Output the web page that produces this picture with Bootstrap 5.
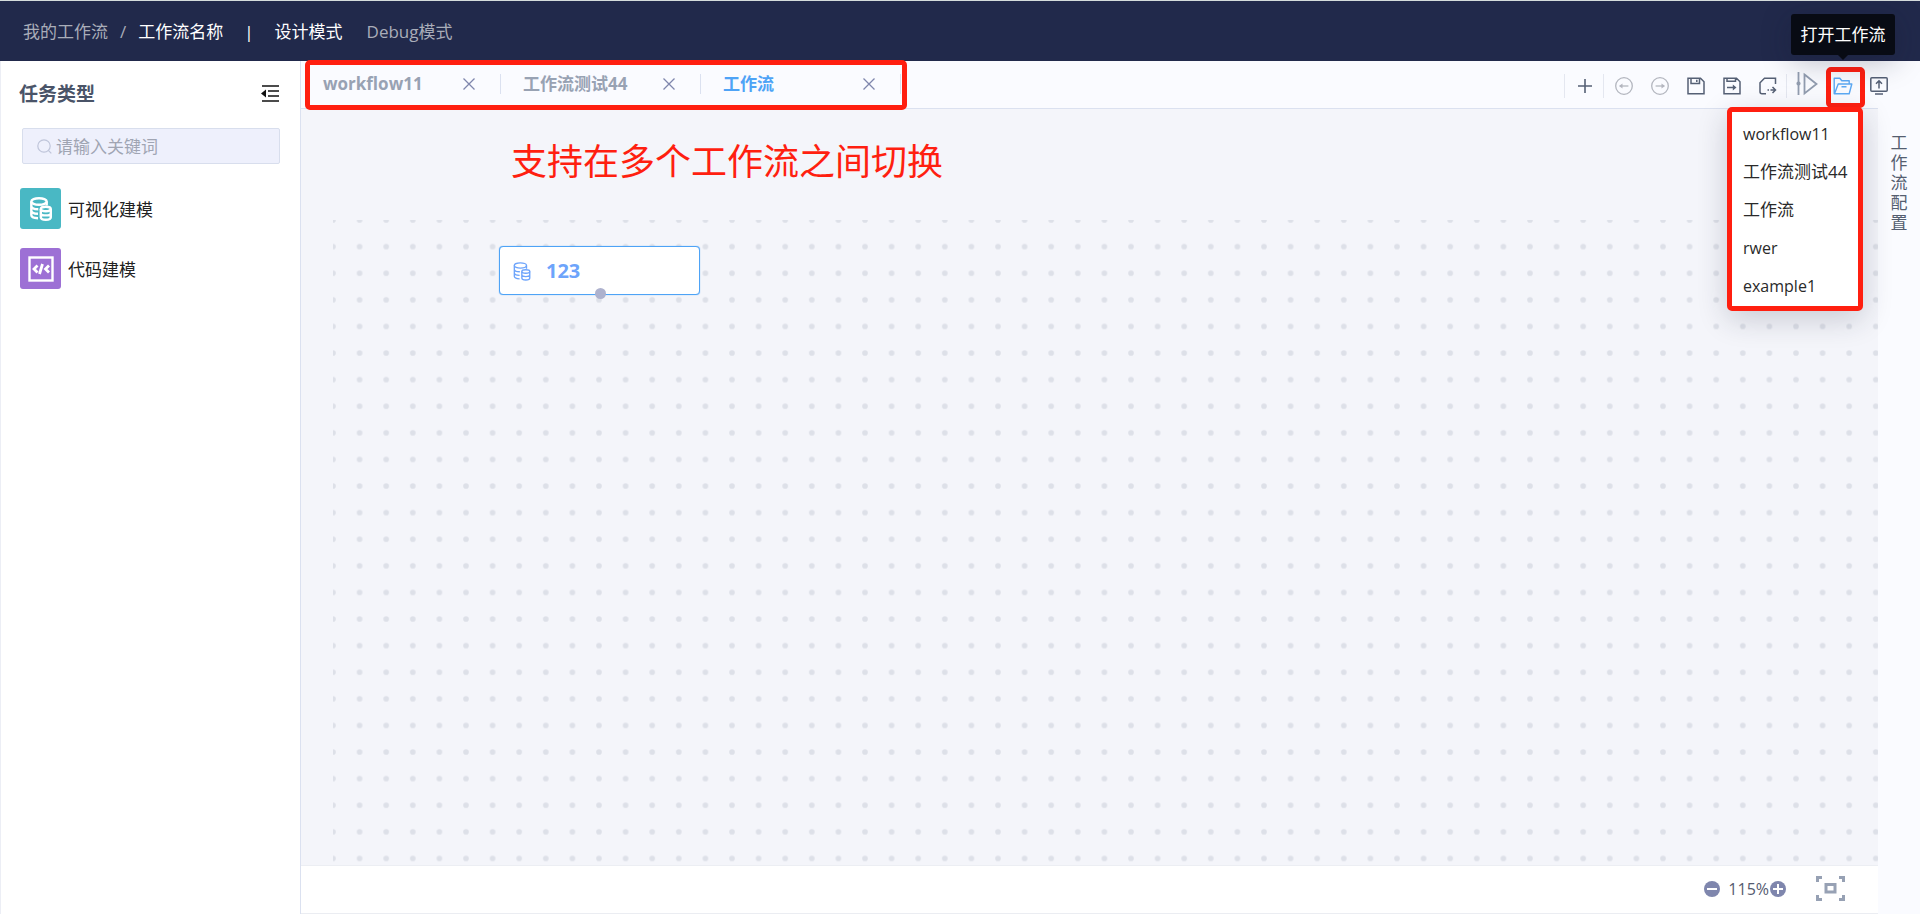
<!DOCTYPE html>
<html lang="zh-CN">
<head>
<meta charset="utf-8">
<meta name="viewport" content="width=device-width, initial-scale=1">
<title>工作流设计</title>
<link href="https://cdn.jsdelivr.net/npm/bootstrap@5.3.0/dist/css/bootstrap.min.css" rel="stylesheet">
<style>
  :root { --line: #dbe1f0; --accent: #4ea3f6; --slate: #556075; --mark-red: #ff1f10; }
  body { font-family: "Open Sans", "Noto Sans CJK SC", sans-serif; font-size: 17px; line-height: 24px; color: #222; background: #fff; }
  a { text-decoration: none; }
  button { padding: 0; border: 0; background: none; color: inherit; }
  svg { display: block; }
  .topbar { height: 61px; background: #21294b; border-top: 1px solid #d5dcdc; padding: 2px 23px 0; gap: 21px; color: #fff; }
  .topbar a { color: #fff; }
  .topbar .dim, .topbar .dim a, .topbar a.dim { color: #a9adb9; }
  .crumbs { gap: 12px; }
  .modes { gap: 24px; }
  .side { width: 301px; border-left: 1px solid #eceef5; border-right: 1px solid var(--line); padding: 20px 20px 0 18px; }
  .side h1 { font-size: 19px; line-height: 26px; font-weight: 700; color: #4a5468; }
  .fold { margin: 0 1px 2px 0; }
  .search { height: 36px; margin: 21px 0 24px 3px; padding: 0 14px; gap: 4px; background: #eef0fc; border: 1px solid #d8deed; border-radius: 2px; color: #bfc5da; }
  .search input { min-width: 0; border: 0; outline: 0; background: none; padding: 2px 0 0; color: #556075; }
  .search input::placeholder { color: #a0a5b3; opacity: 1; }
  .task { gap: 7px; margin: 0 0 19px 1px; color: #222; }
  .task-name { padding-top: 2px; }
  .tile { width: 41px; height: 41px; border-radius: 3px; color: #fff; }
  .teal { background: #49b8c4; }
  .purple { background: #9d70d5; }
  .tools { height: 47px; background: #fafbff; }
  .tabs { height: 47px; z-index: 1; padding-bottom: 2px; }
  .wtab { width: 200px; padding: 0 25px 0 22px; height: 20px; border-right: 1px solid var(--line); color: #98a2b3; font-weight: 700; }
  .wtab a { color: inherit; line-height: 20px; }
  .wtab.current { color: var(--accent); }
  .wtab button { color: #7f86ad; }
  .frame { position: absolute; border: 5px solid var(--mark-red); border-radius: 5px; pointer-events: none; }
  .tab-frame { left: 4px; top: -1px; width: 602px; height: 50px; }
  .open-frame { left: 1px; top: -1px; width: 39px; height: 41px; }
  .actions { padding: 3px 23px 0 0; color: var(--slate); }
  .tool { width: 36px; height: 36px; display: flex; align-items: center; justify-content: center; }
  .tool.off { color: #b3b6bf; }
  .rule { width: 1px; height: 24px; margin-right: 2px; background: #e4e7f0; }
  .open-menu { --bs-dropdown-min-width: 136px; top: 39px; right: -2px; width: 136px; padding: 3px 0 1px; border: 5px solid var(--mark-red); border-radius: 5px; box-shadow: 0 8px 30px rgba(30,35,60,.2); }
  .open-menu a { display: block; padding: 7px 0 7px 11px; font-size: 16px; color: #2a2a2a; white-space: nowrap; }
  .open-menu a.han { font-size: 17px; }
  .tip { position: absolute; top: -54px; left: 50%; transform: translateX(-50%); width: 104px; height: 41px; line-height: 41px; border-radius: 3px; background: #080b14; color: #fff; text-align: center; white-space: nowrap; box-shadow: 0 6px 30px rgba(20,24,45,.28); z-index: 5; }
  .tip::after { content: ""; position: absolute; left: 50%; top: 100%; margin-left: -5px; border: 5px solid transparent; border-bottom: 0; border-top-color: #080b14; }
  .stage { background: #f4f5fa; border-top: 1px solid var(--line); min-height: 400px; }
  .dots { position: absolute; top: 111px; left: 32px; right: 0; bottom: 0; overflow: hidden; }
  .note { position: absolute; left: 210px; top: 28px; font-size: 36px; line-height: 50px; color: var(--mark-red); white-space: nowrap; }
  .node { position: absolute; left: 198px; top: 137px; width: 201px; height: 49px; padding: 1px 13px 0; gap: 15px; background: #fff; border: 1px solid var(--accent); border-radius: 4px; color: #6da4fb; font-size: 20px; font-weight: 700; box-shadow: 0 0 1px var(--accent); }
  .port { position: absolute; left: 50%; bottom: -5px; width: 11px; height: 11px; margin-left: -5px; border-radius: 50%; background: #aeb2ce; }
  .status { height: 49px; padding: 0 33px 2px 0; border-top: 1px solid #eceef3; border-bottom: 1px solid #ebedf2; color: #7f86ad; }
  .zoomval { font-size: 16px; color: #555b70; margin: 0 1px 0 8px; }
  .fit { margin-left: 30px; color: #97a1b4; }
  .rail { width: 42px; background: #fafbff; padding-top: 25px; color: #555e70; }
  .rail a { width: 17px; line-height: 20px; color: inherit; word-break: break-all; }
</style>
</head>
<body class="min-vh-100 d-flex flex-column">

<svg width="0" height="0" class="position-absolute" aria-hidden="true">
  <symbol id="db" viewBox="0 0 22 24" fill="none" stroke="currentColor">
    <ellipse cx="9" cy="4.500" rx="7.700" ry="3.300"/>
    <path d="M1.300 4.500v13.500c0 1.900 2.700 3.100 6.700 3.300M16.700 4.500v4M1.300 9c0 1.900 3 3.200 7 3.300M1.300 13.500c0 1.900 2.900 3.200 6.700 3.300"/>
    <ellipse cx="15.800" cy="12" rx="5" ry="2.200"/>
    <path d="M10.800 12v8.200c0 1.500 2.200 2.500 5 2.500s5-1 5-2.500V12M10.800 16.200c0 1.300 2.200 2.200 5 2.200s5-.9 5-2.200"/>
  </symbol>
  <symbol id="cross" viewBox="0 0 12 12"><path d="M.5.5l11 11M11.500.5l-11 11" stroke="currentColor" stroke-width="1.300"/></symbol>
</svg>

<header class="topbar d-flex align-items-center">
  <nav class="crumbs d-flex align-items-center" aria-label="路径">
    <span class="dim"><a href="#">我的工作流</a></span><span class="dim">/</span><a href="#">工作流名称</a>
  </nav>
  <span>|</span>
  <nav class="modes d-flex align-items-center">
    <a href="#">设计模式</a><a href="#" class="dim">Debug模式</a>
  </nav>
</header>

<div class="d-flex flex-grow-1">
  <aside class="side flex-shrink-0">
    <div class="d-flex justify-content-between align-items-center">
      <h1 class="m-0">任务类型</h1>
      <button type="button" class="fold" aria-label="收起">
        <svg width="18" height="17" viewBox="0 0 18 17"><path d="M1 1h17M7 6h11M7 11h11M1 16h17" stroke="#111" stroke-width="1.600"/><path d="M0 8.500l5-4v8z" fill="#111"/></svg>
      </button>
    </div>
    <label class="search d-flex align-items-center">
      <svg width="15" height="15" viewBox="0 0 15 15" fill="none" stroke="currentColor" stroke-width="1.200" class="flex-shrink-0"><circle cx="7" cy="7" r="6.200"/><path d="M11.300 11.300l3 3"/></svg>
      <input type="text" class="flex-grow-1" placeholder="请输入关键词" aria-label="关键词">
    </label>
    <a href="#" class="task d-flex align-items-center">
      <span class="tile teal d-flex align-items-center justify-content-center"><svg width="22" height="24" stroke-width="2.400"><use href="#db"/></svg></span>
      <span class="task-name">可视化建模</span>
    </a>
    <a href="#" class="task d-flex align-items-center">
      <span class="tile purple d-flex align-items-center justify-content-center">
        <svg width="26" height="26" viewBox="0 0 26 26" fill="none" stroke="currentColor"><rect x="1.500" y="1.500" width="23" height="23" stroke-width="2.400"/><path d="M9.500 9.500L6 13l3.500 3.500M14.500 8l-3 10M21 9.500L17.500 13l3.500 3.500" stroke-width="2.800"/></svg>
      </span>
      <span class="task-name">代码建模</span>
    </a>
  </aside>

  <main class="flex-grow-1 d-flex flex-column">
    <div class="tools d-flex justify-content-between">
      <div class="tabs d-flex align-items-center position-relative">
        <div class="wtab d-flex align-items-center justify-content-between"><a href="#">workflow11</a><button type="button" aria-label="关闭"><svg width="12" height="12"><use href="#cross"/></svg></button></div>
        <div class="wtab d-flex align-items-center justify-content-between"><a href="#">工作流测试44</a><button type="button" aria-label="关闭"><svg width="12" height="12"><use href="#cross"/></svg></button></div>
        <div class="wtab current d-flex align-items-center justify-content-between"><a href="#">工作流</a><button type="button" aria-label="关闭"><svg width="12" height="12"><use href="#cross"/></svg></button></div>
        <div class="frame tab-frame"></div>
      </div>
      <div class="actions d-flex align-items-center">
        <span class="rule"></span>
        <button type="button" class="tool" aria-label="新建"><svg width="14" height="14" viewBox="0 0 14 14"><path d="M7 0v14M0 7h14" stroke="currentColor" stroke-width="1.600"/></svg></button>
        <span class="rule"></span>
        <button type="button" class="tool off" aria-label="撤销"><svg width="18" height="18" viewBox="0 0 18 18" fill="none" stroke="currentColor" stroke-width="1.300"><circle cx="9" cy="9" r="8.300"/><path d="M4.800 9h8.600"/><path d="M4 9l3.500-2.500v5z" fill="currentColor" stroke="none"/></svg></button>
        <button type="button" class="tool off" aria-label="重做"><svg width="18" height="18" viewBox="0 0 18 18" fill="none" stroke="currentColor" stroke-width="1.300"><circle cx="9" cy="9" r="8.300"/><path d="M4.600 9h8.600"/><path d="M14 9l-3.500-2.500v5z" fill="currentColor" stroke="none"/></svg></button>
        <button type="button" class="tool" aria-label="保存"><svg width="18" height="18" viewBox="0 0 18 18" fill="none" stroke="currentColor" stroke-width="1.500"><path d="M1 1.200h12.500L17 4.700v12.100H1zM4 1.200v5.300h8.500V1.200M9.800 2.800v2.200"/></svg></button>
        <button type="button" class="tool" aria-label="另存为"><svg width="18" height="18" viewBox="0 0 18 18" fill="none" stroke="currentColor" stroke-width="1.500"><path d="M1 1.200h12.500L17 4.700v12.100H1zM4 1.200v3h8.500v-3M4 10.500h8"/><path d="M13.500 10.500L9.800 7.500v6z" fill="currentColor" stroke="none"/></svg></button>
        <button type="button" class="tool" aria-label="导出"><svg width="18" height="18" viewBox="0 0 18 18" fill="none" stroke="currentColor" stroke-width="1.500"><path d="M16.500 7V1.200H5.500L1 5.700v9.100a2 2 0 002 2h4M8.500 13h1.500M11.500 13h4.500M13.500 10l3 3-3 3"/></svg></button>
        <span class="rule"></span>
        <button type="button" class="tool pb-1" aria-label="运行"><svg width="22" height="24" viewBox="0 0 22 24" fill="none" stroke="#929db0" stroke-width="1.800"><path d="M2.500 0v23M8.500 2.500L20.500 12 8.500 21.500z"/><circle cx="2.500" cy="11.500" r="1.200" fill="#929db0"/></svg></button>
        <div class="position-relative">
          <button type="button" class="tool" aria-label="打开工作流"><svg width="20" height="18" viewBox="0 0 20 18" fill="none" stroke="#5ca9f4" stroke-width="1.400" stroke-linejoin="round"><path d="M4 16.800H1.200V1.300h5.600l2 2.500h7.400v3M1.500 16.800L5.200 7h13.600l-2.600 9.800zM8.500 9.800h5"/></svg></button>
          <div class="tip" role="tooltip">打开工作流</div>
          <div class="dropdown-menu show open-menu">
            <a href="#">workflow11</a>
            <a href="#" class="han">工作流测试44</a>
            <a href="#" class="han">工作流</a>
            <a href="#">rwer</a>
            <a href="#">example1</a>
          </div>
          <div class="frame open-frame"></div>
        </div>
        <button type="button" class="tool" aria-label="发布"><svg width="18" height="18" viewBox="0 0 18 18" fill="none" stroke="currentColor" stroke-width="1.500"><rect x=".8" y=".8" width="16.400" height="13.400" rx="1"/><path d="M9 11.500V4M6 6.700l3-3 3 3M5 17h8"/></svg></button>
      </div>
    </div>

    <div class="d-flex flex-grow-1">
      <div class="flex-grow-1 d-flex flex-column">
        <section class="stage flex-grow-1 position-relative">
          <div class="dots">
            <svg width="100%" height="100%" aria-hidden="true">
              <pattern id="grid" width="133" height="133" patternUnits="userSpaceOnUse" patternTransform="scale(.2)">
                <g fill="#dde0e8"><circle r="14"/><circle cx="133" r="14"/><circle cy="133" r="14"/><circle cx="133" cy="133" r="14"/></g>
              </pattern>
              <rect width="100%" height="100%" fill="url(#grid)"/>
            </svg>
          </div>
          <div class="note">支持在多个工作流之间切换</div>
          <div class="node d-flex align-items-center">
            <svg width="18" height="19" stroke-width="1.700"><use href="#db"/></svg>
            <span>123</span>
            <span class="port"></span>
          </div>
        </section>
        <footer class="status d-flex align-items-center justify-content-end">
          <button type="button" aria-label="缩小"><svg width="16" height="16" viewBox="0 0 16 16"><circle cx="8" cy="8" r="8" fill="currentColor"/><path d="M3 8h10" stroke="#fff" stroke-width="2"/></svg></button>
          <span class="zoomval">115%</span>
          <button type="button" aria-label="放大"><svg width="16" height="16" viewBox="0 0 16 16"><circle cx="8" cy="8" r="8" fill="currentColor"/><path d="M3 8h10M8 3v10" stroke="#fff" stroke-width="2"/></svg></button>
          <button type="button" class="fit" aria-label="适应画布"><svg width="29" height="25" viewBox="0 0 29 25" fill="none" stroke="currentColor" stroke-width="3"><path d="M1.500 6V1.500H6M23 1.500h4.500V6M27.500 19v4.500H23M6 23.500H1.500V19"/><rect x="10" y="8.500" width="9" height="7.500"/></svg></button>
        </footer>
      </div>
      <aside class="rail flex-shrink-0 d-flex justify-content-center align-items-start"><a href="#">工作流配置</a></aside>
    </div>
  </main>
</div>

<script src="https://cdn.jsdelivr.net/npm/bootstrap@5.3.0/dist/js/bootstrap.bundle.min.js"></script>
</body>
</html>
